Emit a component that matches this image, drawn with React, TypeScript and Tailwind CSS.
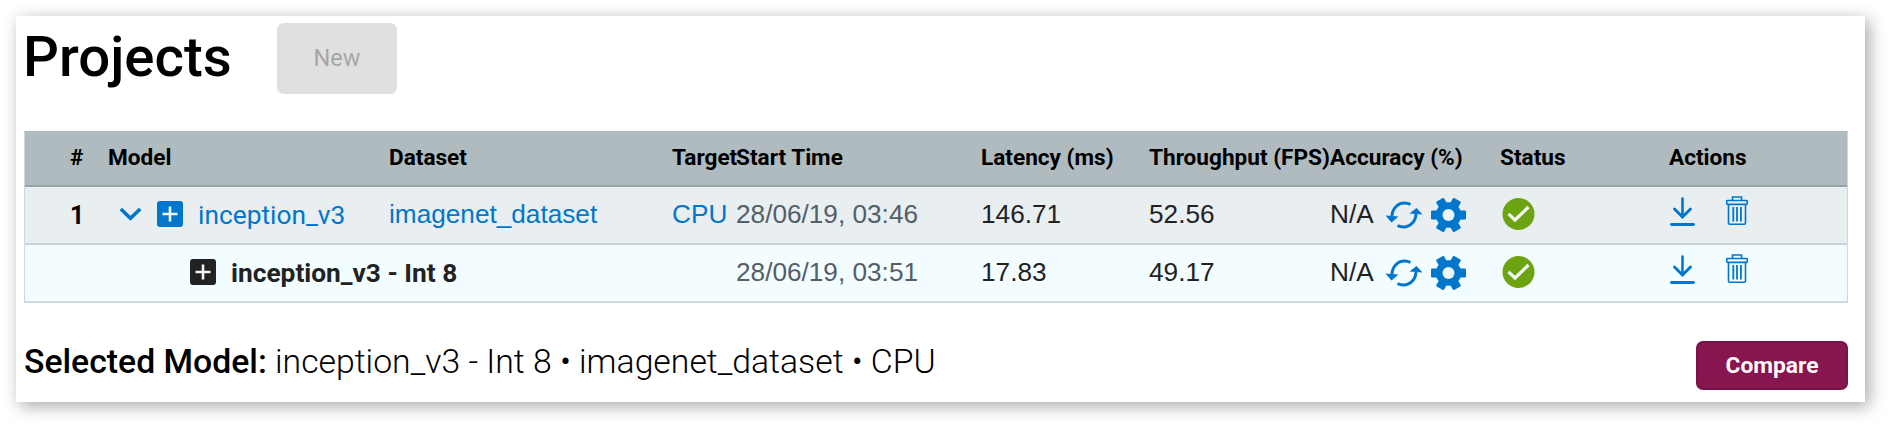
import type { ReactNode } from 'react';

const columns =
  'grid grid-cols-[83px_281px_283px_64px_245px_168px_181px_170px_169px_1fr] items-center';

function Chevron() {
  return (
    <svg className="mr-[15px] mb-[3px] h-[14px] w-[23px]" viewBox="0 0 23 14" fill="none" stroke="currentColor" strokeWidth="3.600">
      <path d="M1.800 2 L11.500 11.200 L21.200 2" />
    </svg>
  );
}

function PlusBox({ className }: { className?: string }) {
  return (
    <svg className={`mb-[2px] h-[26px] w-[26px] ${className ?? ''}`} viewBox="0 0 26 26">
      <rect width="26" height="26" rx="3" fill="currentColor" />
      <path d="M13 5.500v15M5.500 13h15" className="stroke-[#eef3f6]" strokeWidth="2.6" />
    </svg>
  );
}

function Refresh() {
  return (
    <svg className="mb-[1px] h-[28px] w-[38px] text-[#0077cc]" viewBox="0 0 38 28" fill="none">
      <path d="M7 15.5C7 8 12.5 2 19.5 2c2.200 0 4 .4 6 1.500M31 12.500C31 20 25.500 26 18.500 26c-2.200 0-4-.4-6-1.500" stroke="currentColor" strokeWidth="3" />
      <path d="M.5 14.500 13.500 15.500 6.500 21.500ZM37.500 13.500 24.500 12.500 31.500 7Z" fill="currentColor" />
    </svg>
  );
}

function Gear() {
  return (
    <svg className="mb-[1px] h-[34px] w-[35px] text-[#0077cc]" viewBox="0 0 35 34">
      <g fill="currentColor">
        <circle cx="17.500" cy="17" r="12.700" />
        {[0, 60, 120].map((angle) => (
          <path key={angle} d="M1 12.500 L34 12.500 Q35 12.500 35 13.500 L35 20.500 Q35 21.500 34 21.500 L1 21.500 Q0 21.500 0 20.500 L0 13.500 Q0 12.500 1 12.500Z" transform={`rotate(${angle} 17.500 17)`} />
        ))}
      </g>
      <circle cx="17.500" cy="17" r="6" className="fill-[#eef5f8]" />
    </svg>
  );
}

function CheckCircle() {
  return (
    <svg className="mb-[2px] ml-[2px] h-[32px] w-[33px]" viewBox="0 0 33 32">
      <circle cx="16.500" cy="16" r="16" fill="#6ca311" />
      <path d="M6.500 15.800 13 22 26.500 9" fill="none" className="stroke-[#f1f7f3]" strokeWidth="3.200" />
    </svg>
  );
}

function Download() {
  return (
    <svg className="ml-[1px] h-[29px] w-[25px]" viewBox="0 0 25 29" fill="none" stroke="currentColor" strokeLinecap="round">
      <path d="M12.500 1.500V19.500" strokeWidth="2.600" />
      <path d="M4.500 12 12.500 20 20.500 12" strokeWidth="2.900" />
      <path d="M1.500 27.500h22" strokeWidth="2.900" />
    </svg>
  );
}

function Trash() {
  return (
    <svg className="mb-[2px] ml-[31px] h-[29px] w-[22px]" viewBox="0 0 22 29" fill="none" stroke="currentColor">
      <path d="M6.500 4V1h9v3" strokeWidth="1.600" />
      <rect x=".7" y="4.500" width="20.600" height="3.800" rx=".8" strokeWidth="1.700" />
      <path d="M2.500 8.500V27q0 1.200 1.200 1.200H18.300q1.200 0 1.200-1.200V8.500" strokeWidth="1.600" />
      <path d="M7.300 11v14.500M11 11v14.500M14.900 11v14.500" strokeWidth="1.800" />
    </svg>
  );
}

interface RowProps {
  index?: string;
  model: ReactNode;
  dataset?: string;
  target?: string;
  time: string;
  latency: string;
  fps: string;
  className: string;
}

function Row({ index, model, dataset, target, time, latency, fps, className }: RowProps) {
  return (
    <div className={`${columns} h-[58px] border-b-2 font-['Liberation_Sans',sans-serif] text-[26.2px] leading-[30px] whitespace-nowrap text-[#222] ${className}`}>
      <div className="pt-[1px] pl-[45px] font-['Roboto',sans-serif] text-[25px] font-bold text-black">{index}</div>
      <div className="flex items-center font-['Roboto',sans-serif] text-[26.3px]">{model}</div>
      <div className="pb-[2px] text-[#0077cc]">{dataset}</div>
      <div className="pb-[2px] text-[#0077cc]">{target}</div>
      <div className="pb-[2px] text-[#525f69]">{time}</div>
      <div className="pb-[2px]">{latency}</div>
      <div className="pb-[2px]">{fps}</div>
      <div className="flex items-center">
        <span className="w-[55px] pb-[2px]">N/A</span>
        <Refresh />
        <span className="ml-[8px]"><Gear /></span>
      </div>
      <div><CheckCircle /></div>
      <div className="flex items-center pb-[7px] text-[#0077cc]">
        <Download />
        <Trash />
      </div>
    </div>
  );
}

export default function App() {
  return (
    <div className="h-[426px] w-[1889px] overflow-hidden bg-white p-4 font-['Roboto',sans-serif] text-black">
      <main className="flex h-[386px] w-[1849px] flex-col bg-white pl-2 shadow-[4px_4px_16px_rgba(0,0,0,0.35)]">
        <header className="flex h-[115px] items-start pt-[7px]">
          <h1 className="-ml-px w-[254px] text-[56.4px] leading-[68px] font-medium">Projects</h1>
          <button className="h-[71px] w-[120px] rounded-[7px] bg-[#e0e0e0] pt-[1px] text-[23.500px] text-[#a6a6a6]">New</button>
        </header>
        <section className="w-[1824px] border-x border-[#cfd9dc]">
          <div className={`${columns} h-[56px] border-b-2 border-[#98a3a8] bg-[#afbbbf] text-[22.6px] font-bold whitespace-nowrap`}>
            <div className="pl-[45px]">#</div>
            <div>Model</div>
            <div>Dataset</div>
            <div>Target</div>
            <div>Start Time</div>
            <div>Latency (ms)</div>
            <div>Throughput (FPS)</div>
            <div>Accuracy (%)</div>
            <div>Status</div>
            <div>Actions</div>
          </div>
          <Row
            index="1"
            model={
              <span className="flex items-center pl-[11px] text-[#0077cc]">
                <Chevron />
                <PlusBox className="mr-[15px]" />
                inception_v3
              </span>
            }
            dataset="imagenet_dataset"
            target="CPU"
            time="28/06/19, 03:46"
            latency="146.71"
            fps="52.56"
            className="border-[#ccd2d6] bg-[#e9eef1]"
          />
          <Row
            model={
              <span className="flex items-center pl-[82px] font-bold">
                <PlusBox className="mr-[15px]" />
                inception_v3 - Int 8
              </span>
            }
            time="28/06/19, 03:51"
            latency="17.83"
            fps="49.17"
            className="border-[#cfdcdf] bg-[#f3fcff]"
          />
        </section>
        <footer className="flex w-[1824px] items-start justify-between pt-[38px]">
          <p className="pt-[1px] text-[33.75px] leading-[40px] font-light">
            <strong className="font-medium">Selected Model:</strong> inception_v3 - Int 8 • imagenet_dataset • CPU
          </p>
          <button className="h-[49px] w-[152px] rounded-[7px] border-2 border-[#78124a] bg-[#87154f] pt-[2px] text-[22.8px] font-bold text-[#fafafa]">Compare</button>
        </footer>
      </main>
    </div>
  );
}
